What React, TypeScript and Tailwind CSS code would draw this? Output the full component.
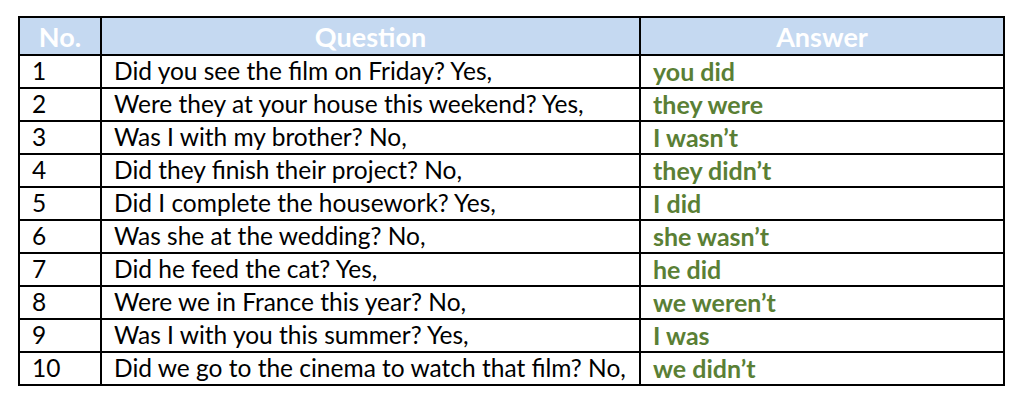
const ROWS: { q: string; a: string }[] = [
  { q: "Did you see the film on Friday? Yes,", a: "you did" },
  { q: "Were they at your house this weekend? Yes,", a: "they were" },
  { q: "Was I with my brother? No,", a: "I wasn’t" },
  { q: "Did they finish their project? No,", a: "they didn’t" },
  { q: "Did I complete the housework? Yes,", a: "I did" },
  { q: "Was she at the wedding? No,", a: "she wasn’t" },
  { q: "Did he feed the cat? Yes,", a: "he did" },
  { q: "Were we in France this year? No,", a: "we weren’t" },
  { q: "Was I with you this summer? Yes,", a: "I was" },
  { q: "Did we go to the cinema to watch that film? No,", a: "we didn’t" },
];

export default function App() {
  return (
    <div className="h-[407px] w-[1024px] bg-white pl-[18px] pt-[16px] font-['Lato','Open_Sans',sans-serif]">
      <table className="w-[987px] table-fixed border-collapse border-2 border-black">
        <colgroup>
          <col className="w-[82px]" />
          <col className="w-[539px]" />
          <col />
        </colgroup>
        <thead>
          <tr className="h-[38px] bg-[#c5d9f1] text-[27px] font-bold text-white">
            <th className="border-2 border-black text-center leading-none">No.</th>
            <th className="border-2 border-black text-center leading-none">Question</th>
            <th className="border-2 border-black text-center leading-none">Answer</th>
          </tr>
        </thead>
        <tbody>
          {ROWS.map((r, i) => (
            <tr key={i} className="h-[33px] leading-none">
              <td className="border-2 border-black px-[12px] text-[24.5px] text-black">{i + 1}</td>
              <td className="border-2 border-black px-[12px] text-[24.5px] whitespace-nowrap text-black">{r.q}</td>
              <td className="border-2 border-black px-[12px] text-[25px] font-bold text-[#5a7f35]">{r.a}</td>
            </tr>
          ))}
        </tbody>
      </table>
    </div>
  );
}
